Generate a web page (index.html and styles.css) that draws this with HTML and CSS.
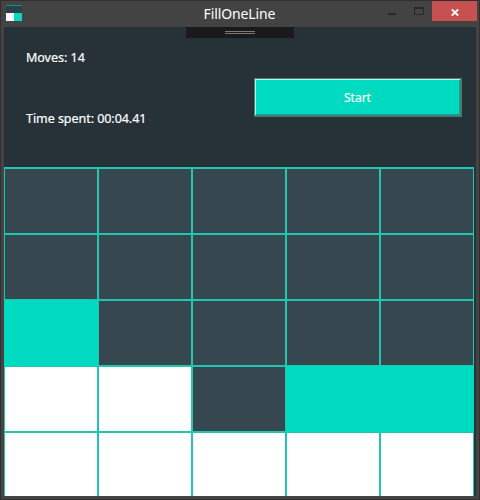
FILE: index.html
```html
<!DOCTYPE html>
<html lang="en">
<head>
<meta charset="utf-8">
<title>FillOneLine</title>
<link rel="stylesheet" href="styles.css">
</head>
<body>
<div class="window">
  <header class="titlebar">
    <svg class="app-icon" width="16" height="16" viewBox="0 0 16 16" shape-rendering="crispEdges">
      <path fill="#294149" d="M0 0h16v8H0z"/><path fill="#168b83" d="M0 0h16v1H0z"/>
      <path fill="#fff" d="M0 8h8v8H0z"/><path fill="#00dac0" d="M8 8h8v8H8z"/>
    </svg>
    <h1 class="title">FillOneLine</h1>
    <div class="controls">
      <svg class="control" width="27" height="20" viewBox="0 0 27 20"><path fill="#292929" d="M4 12h8v2H4z"/></svg>
      <svg class="control" width="21" height="20" viewBox="0 0 21 20" shape-rendering="crispEdges"><path fill="#292929" fill-rule="evenodd" d="M3 6h10v8H3zM4 8v5h8V8z"/></svg>
      <button class="close" aria-label="Close"><svg width="8" height="7" viewBox="0 0 8 7"><path d="M.8.3 7.2 6.7M7.2.3.8 6.7" stroke="#fff" stroke-width="1.8"/></svg></button>
    </div>
  </header>
  <main class="client">
    <div class="handle"><span></span></div>
    <section class="panel">
      <div class="stats">
        <p class="moves">Moves: 14</p>
        <p class="time">Time spent: 00:04.41</p>
      </div>
      <button class="start">Start</button>
    </section>
    <div class="board">
      <i></i><i></i><i></i><i></i><i></i>
      <i></i><i></i><i></i><i></i><i></i>
      <i class="on"></i><i></i><i></i><i></i><i></i>
      <i class="white"></i><i class="white"></i><i></i><i class="on"></i><i class="on"></i>
      <i class="white"></i><i class="white"></i><i class="white"></i><i class="white"></i><i class="white"></i>
    </div>
  </main>
</div>
</body>
</html>
```
FILE: styles.css
```css
* { box-sizing: border-box; }
body { margin: 0; overflow: hidden; font-family: "Noto Sans", sans-serif; color: #fff; }
h1, p { margin: 0; font-weight: 400; white-space: nowrap; }
button { font: inherit; color: inherit; padding: 0; }
.window {
  width: 480px; height: 500px; padding: 0 3px 3px;
  background: #434343; border: 1px solid #303030;
  display: flex; flex-direction: column;
}
.titlebar { height: 26px; flex: none; display: grid; grid-template-columns: 93px 1fr 93px; align-items: start; }
.app-icon { margin: 4px 0 0 2px; }
.title { font-size: 14px; line-height: 26px; text-align: center; letter-spacing: -0.12px; padding-right: 1px; }
.controls { display: flex; justify-content: flex-end; margin-right: -1px; }
.control { flex: none; }
.close { width: 45px; height: 20px; flex: none; border: 0; background: #c75050; display: flex; align-items: center; justify-content: center; padding-top: 2px; }
.client { height: 469px; background: #263238; overflow: hidden; display: flex; flex-direction: column; }
.handle { width: 108px; height: 11px; flex: none; margin-left: 182px; background: #1a1a1a; display: flex; justify-content: center; padding-top: 4px; }
.handle span { width: 30px; height: 3px; border: solid #7d7973; border-width: 1px 0; }
.panel { height: 129px; flex: none; display: flex; justify-content: space-between; padding: 0 14px 0 22px; }
.stats { font-size: 12.5px; line-height: 18px; padding-top: 11px; -webkit-text-stroke: 0.2px; }
.moves { letter-spacing: -0.02px; }
.time { margin-top: 43px; letter-spacing: -0.05px; }
.start {
  width: 208px; height: 39px; margin-top: 40px; background: #00dac0;
  border: solid; border-width: 1px 2px 2px 1px; border-color: #4d827a #467b72 #467b72 #4d827a;
  box-shadow: inset 1px 1px #b5f5e9, inset -1px -1px #16a797;
  font-size: 12px; line-height: 35px; -webkit-text-stroke: 0.2px;
}
.board { width: 470px; flex: none; display: grid; grid-template-columns: repeat(5, 94px); grid-auto-rows: 66px; border-top: 1px solid #21c6b1; }
.board i { background: #37474f; border: 1px solid #21c6b1; }
.board .on { background: #00dac0; border-color: #00dac0; }
.board .white { background: #fff; }
```
